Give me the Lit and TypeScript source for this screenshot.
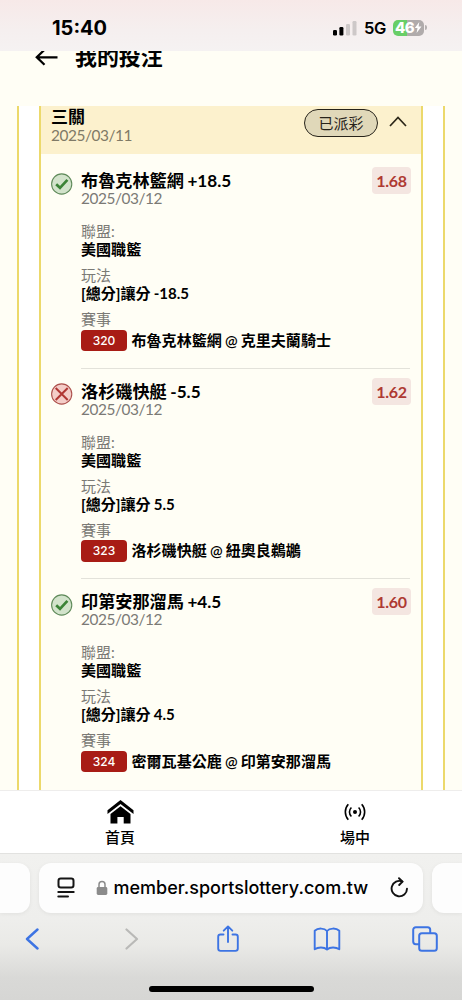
import { LitElement, html, css, svg } from "lit";
import { customElement, property } from "lit/decorators.js";

interface Leg {
  team: string;
  date: string;
  odds: string;
  won: boolean;
  league: string;
  play: string;
  code: string;
  match: string;
}

const LEGS: Leg[] = [
  { team: "布魯克林籃網 +18.5", date: "2025/03/12", odds: "1.68", won: true, league: "美國職籃", play: "[總分]讓分 -18.5", code: "320", match: "布魯克林籃網 @ 克里夫蘭騎士" },
  { team: "洛杉磯快艇 -5.5", date: "2025/03/12", odds: "1.62", won: false, league: "美國職籃", play: "[總分]讓分 5.5", code: "323", match: "洛杉磯快艇 @ 紐奧良鵜鶘" },
  { team: "印第安那溜馬 +4.5", date: "2025/03/12", odds: "1.60", won: true, league: "美國職籃", play: "[總分]讓分 4.5", code: "324", match: "密爾瓦基公鹿 @ 印第安那溜馬" },
];

@customElement("status-bar")
class StatusBar extends LitElement {
  static styles = css`
    :host { display: flex; height: 51px; box-sizing: border-box; padding: 4px 36px 0 52px; align-items: center; justify-content: space-between;
      background: linear-gradient(#f7e9e8, #f5efef 60%, #f5f2f2); font-family: Inter, sans-serif; color: #000; }
    .time { font-size: 20px; font-weight: 700; }
    .right { display: flex; align-items: center; margin-right: -1px; }
    .net { font-size: 16.5px; font-weight: 600; margin: 0 7px 0 7px; width: 22px; letter-spacing: -0.3px; }
    svg { display: block; }
    .batt { display: flex; align-items: center; justify-content: center; width: 31px; height: 16px; border-radius: 5px;
      background: linear-gradient(90deg, #68ce67 46%, #b0abab 46%); color: #fff; font-size: 15px; font-weight: 800; letter-spacing: -0.6px; }
    .cap { width: 2px; height: 5px; border-radius: 0 2px 2px 0; background: #b5b0b0; margin-left: 1px; }
  `;
  render() {
    return html`
      <span class="time">15:40</span>
      <span class="right">
        <svg width="24" height="16" viewBox="0 0 24 16">
          <rect x="0" y="10" width="4" height="5.5" rx="1.2" />
          <rect x="6.4" y="7" width="4" height="8.5" rx="1.2" />
          <rect x="13" y="4" width="4" height="11.5" rx="1.2" fill="#cdc8c8" />
          <rect x="19.5" y="1" width="4" height="14.5" rx="1.2" fill="#cdc8c8" />
        </svg>
        <span class="net">5G</span>
        <span class="batt">46<svg width="8" height="11" viewBox="0 0 8 11"><path d="M5.3 0 .8 6h2.7L2.6 11 7.5 4.6H4.6z" fill="#fff" /></svg></span>
        <span class="cap"></span>
      </span>`;
  }
}

@customElement("bet-leg")
class BetLeg extends LitElement {
  @property({ attribute: false }) leg!: Leg;
  static styles = css`
    :host { display: grid; grid-template-columns: 30px 1fr; height: 210.5px; box-sizing: border-box; padding: 13px 11px 0 10px; }
    .icon { margin-top: 1.5px; }
    svg { display: block; }
    .body { display: flex; flex-direction: column; height: 197.5px; box-sizing: border-box; border-bottom: 1px solid #e3e2da; }
    :host(:last-child) .body { border-bottom: 0; }
    .head { display: flex; justify-content: space-between; height: 51px; }
    .team { font-size: 17.15px; font-weight: 700; line-height: 20px; white-space: nowrap; color: #000; word-spacing: -0.6px; }
    .date { font-size: 15.4px; line-height: 16px; color: #7b7a75; letter-spacing: -0.43px; margin-top: -0.6px; }
    .odds { width: 39px; height: 27px; border-radius: 4px; background: #f4e6e1; color: #ae3a33; font-size: 16px; font-weight: 700; letter-spacing: -0.3px;
      line-height: 27px; text-align: center; margin-right: -1px; margin-top: -3.7px; }
    .label { font-size: 15px; line-height: 18px; color: #7b7a75; }
    .value { font-size: 15.05px; font-weight: 700; line-height: 19px; margin-bottom: 7px; color: #000; white-space: nowrap; word-spacing: -0.6px; }
    .game { display: flex; align-items: center; gap: 4.5px; height: 21px; margin: 1.9px 0 0; line-height: 21px; }
    .code { width: 46px; height: 21.5px; border-radius: 4px; background: #a81c15; color: #fff; text-align: center; font: 500 12px/21.5px Inter, sans-serif; }
    .match { font-weight: 600; }
  `;
  render() {
    const l = this.leg;
    return html`
      <div class="icon">
        ${l.won
          ? svg`<svg width="22" height="24" viewBox="0 0 22 24"><circle cx="10.7" cy="11" r="10.1" fill="#d2e3cb" stroke="#5f8a5a" stroke-width="1.1"/><path d="M5.2 11.2 9 14.8 16.4 6.8" fill="none" stroke="#3b8336" stroke-width="2.7"/></svg>`
          : svg`<svg width="22" height="24" viewBox="0 0 22 24"><circle cx="10.7" cy="11" r="10.1" fill="#f4cdc8" stroke="#ad504c" stroke-width="1.1"/><path d="m4.7 5 12 12M16.7 5 4.7 17" fill="none" stroke="#b13733" stroke-width="2"/></svg>`}
      </div>
      <div class="body">
        <div class="head">
          <div>
            <div class="team">${l.team}</div>
            <div class="date">${l.date}</div>
          </div>
          <div class="odds">${l.odds}</div>
        </div>
        <div class="label">聯盟:</div>
        <div class="value">${l.league}</div>
        <div class="label">玩法</div>
        <div class="value">${l.play}</div>
        <div class="label">賽事</div>
        <div class="value game"><span class="code">${l.code}</span><span class="match">${l.match}</span></div>
      </div>`;
  }
}

@customElement("safari-bar")
class SafariBar extends LitElement {
  static styles = css`
    :host { display: flex; flex-direction: column; height: 147px; box-sizing: border-box; border-top: 1px solid #e2e2e0;
      background: linear-gradient(#f1f1ef, #eeeeec 45%, #eaeae7 62%, #d9d9d7 85%, #d6d6d4); }
    svg { display: block; }
    .tabs { display: flex; gap: 9px; margin-top: 8.5px; height: 50px; }
    .side { width: 30px; background: #fdfdfd; border-radius: 0 12px 12px 0; box-shadow: 0 1px 4px rgba(0,0,0,.06); }
    .side.next { border-radius: 12px 0 0 12px; }
    .url { display: flex; align-items: center; flex: 1; box-sizing: border-box; padding: 0 14px 0 18px; background: #fdfdfd; border-radius: 12px; box-shadow: 0 1px 4px rgba(0,0,0,.06); }
    .lock { margin-left: 21px; }
    .host { font: 550 18px/24px Inter, sans-serif; color: #000; margin-left: 5.5px; white-space: nowrap; flex: 1; letter-spacing: 0.02px; }
    .tools { display: grid; grid-template-columns: repeat(5, 98.4px); justify-items: center; align-items: center; height: 30px; margin: 11px 0 0 -17.7px; }
    .fwd { padding-left: 4px; }
    .home { width: 165px; height: 5.5px; border-radius: 3px; background: #000; margin: 32.5px auto 0; }
  `;
  render() {
    return html`
      <div class="tabs">
        <div class="side"></div>
        <div class="url">
          <svg width="18" height="22" viewBox="0 0 18 22" fill="none" stroke="#151515" stroke-width="2" stroke-linecap="round"><rect x="1.5" y="1.5" width="15" height="9" rx="2.3"/><path d="M1.3 15H16.7M1.3 19.5H11"/></svg>
          <svg class="lock" width="12" height="16" viewBox="0 0 12 16"><path d="M3 8V4.6a3 3 0 0 1 6 0V8" fill="none" stroke="#8b8b8b" stroke-width="1.5"/><rect x=".7" y="7" width="10.6" height="8" rx="1.4" fill="#8b8b8b"/></svg>
          <span class="host">member.sportslottery.com.tw</span>
          <svg width="19" height="21" viewBox="0 0 19 21" fill="none" stroke="#111" stroke-width="1.9" stroke-linecap="round" stroke-linejoin="round"><path d="M12.4 4.6A7.7 7.7 0 1 0 17 11.7"/><path d="M9 1.2 12.5 4.6 9.2 8"/></svg>
        </div>
        <div class="side next"></div>
      </div>
      <div class="tools">
        <svg width="14" height="22" viewBox="0 0 14 22" fill="none" stroke="#3d74e3" stroke-width="2.4" stroke-linecap="round" stroke-linejoin="round"><path d="M12.5 1.5 2 11 12.500 20.5"/></svg>
        <svg class="fwd" width="14" height="22" viewBox="0 0 14 22" fill="none" stroke="#b9b9b7" stroke-width="2.2" stroke-linecap="round" stroke-linejoin="round"><path d="M1.5 1.5 12 11 1.5 20.5"/></svg>
        <svg width="24" height="28" viewBox="0 0 24 28" fill="none" stroke="#3d74e3" stroke-width="1.9" stroke-linecap="round" stroke-linejoin="round"><path d="M7.5 9.5H4.5A2.3 2.3 0 0 0 2.2 11.8V23.6A2.3 2.3 0 0 0 4.5 25.9H19.5A2.3 2.3 0 0 0 21.8 23.6V11.8A2.3 2.3 0 0 0 19.5 9.5H16.5M12 17V1.5M7.7 5.7 12 1.4 16.3 5.7"/></svg>
        <svg width="28" height="24" viewBox="0 0 28 24" fill="none" stroke="#3d74e3" stroke-width="1.9" stroke-linejoin="round"><path d="M14 4C11.5 1 5 .6 1.7 3.8V22.2C5 20 11 19.8 14 22.5 17 19.8 23 20 26.3 22.2V3.8C23 .6 16.5 1 14 4V22.5"/></svg>
        <svg width="26" height="26" viewBox="0 0 26 26" fill="none" stroke="#3d74e3" stroke-width="2" stroke-linejoin="round"><path d="M7 18.2H3.8A2.6 2.6 0 0 1 1.2 15.6V3.8A2.6 2.6 0 0 1 3.8 1.2H15.6A2.6 2.6 0 0 1 18.2 3.8V7"/><rect x="7.2" y="7.2" width="17.6" height="17.6" rx="2.6"/></svg>
      </div>
      <div class="home"></div>`;
  }
}

@customElement("app-root")
class AppRoot extends LitElement {
  static styles = css`
    :host { display: flex; flex-direction: column; width: 462px; height: 1000px; overflow: hidden; background: #fffef5; color: #000;
      font-family: Lato, "Noto Sans CJK TC", sans-serif; }
    svg { display: block; }
    status-bar { position: relative; z-index: 1; flex: none; }
    .top { display: flex; height: 55px; align-items: flex-start; padding-left: 35px; flex: none; }
    .back { margin-top: -2px; }
    .title { font-size: 21.9px; font-weight: 600; line-height: 30px; margin: -9.4px 0 0 16px; }
    .outer { height: 684px; flex: none; margin: 0 17.5px 0 17px; border: solid #ecd96b; border-width: 0 2px; background: #fff; padding: 0 19.5px 0 20px; overflow: hidden; box-sizing: border-box; }
    .inner { height: 100%; box-sizing: border-box; border: solid #ecd96b; border-width: 0 2px; background: #fffef5; }
    .group { display: flex; justify-content: space-between; height: 48px; background: #fcf1cd; padding: 0 14.5px 0 10px; margin-bottom: 4px; box-sizing: border-box; }
    .kind { font-size: 17px; font-weight: 600; line-height: 20px; margin-top: 1px; }
    .day { font-size: 15.4px; line-height: 16px; color: #807a66; letter-spacing: -0.43px; }
    .state { display: flex; align-items: flex-start; gap: 10.5px; }
    .pill { width: 74px; height: 28px; box-sizing: border-box; margin-top: 3px; border: 1.3px solid #27231a; border-radius: 14px; background: #e0d8b9; font-size: 15px; line-height: 26px; text-align: center; color: #27231a; }
    .caret { margin-top: 10px; }
    .nav { display: flex; height: 63px; box-sizing: border-box; border-top: 1.5px solid #eeedec; background: #fff; flex: none; padding-left: 2.5px; }
    .tab { display: flex; flex: none; flex-direction: column; align-items: center; width: 235px; font-size: 15px; font-weight: 500; line-height: 20px; }
    .pic { display: flex; height: 26px; align-items: center; margin: 8px 0 2px; }
  `;
  render() {
    return html`
      <status-bar></status-bar>
      <div class="top">
        <svg class="back" width="24" height="18" viewBox="0 0 24 18" fill="none" stroke="#000" stroke-width="2.3"><path d="M22.5 8.3H1.5M9.5 .8 1.8 8.3 9.5 15.8"/></svg>
        <div class="title">我的投注</div>
      </div>
      <div class="outer"><div class="inner">
        <div class="group">
          <div><div class="kind">三關</div><div class="day">2025/03/11</div></div>
          <div class="state">
            <div class="pill">已派彩</div>
            <svg class="caret" width="18" height="12" viewBox="0 0 18 12" fill="none" stroke="#2c2718" stroke-width="1.7"><path d="M1 10 9 1.5 17 10"/></svg>
          </div>
        </div>
        ${LEGS.map((l) => html`<bet-leg .leg=${l}></bet-leg>`)}
      </div></div>
      <div class="nav">
        <div class="tab">
          <div class="pic"><svg width="27" height="24" viewBox="0 0 27 24"><path d="M13.5 0 26.5 10.2V14L13.5 3.9.5 14V10.2zM13.5 6.2 23.5 14V23.5H16.7V17H10.4V23.5H3.5V14z"/></svg></div>
          首頁
        </div>
        <div class="tab">
          <div class="pic"><svg width="22" height="18" viewBox="0 0 22 18" fill="none" stroke="#000" stroke-width="1.6"><circle cx="11" cy="9" r="2" fill="#000" stroke="none"/><path d="M7.4 4.5a6.2 6.2 0 0 0 0 9M14.6 4.5a6.2 6.2 0 0 1 0 9M4.3 1.3a11.5 11.5 0 0 0 0 15.4M17.7 1.3a11.5 11.5 0 0 1 0 15.4"/></svg></div>
          場中
        </div>
      </div>
      <safari-bar></safari-bar>`;
  }
}
